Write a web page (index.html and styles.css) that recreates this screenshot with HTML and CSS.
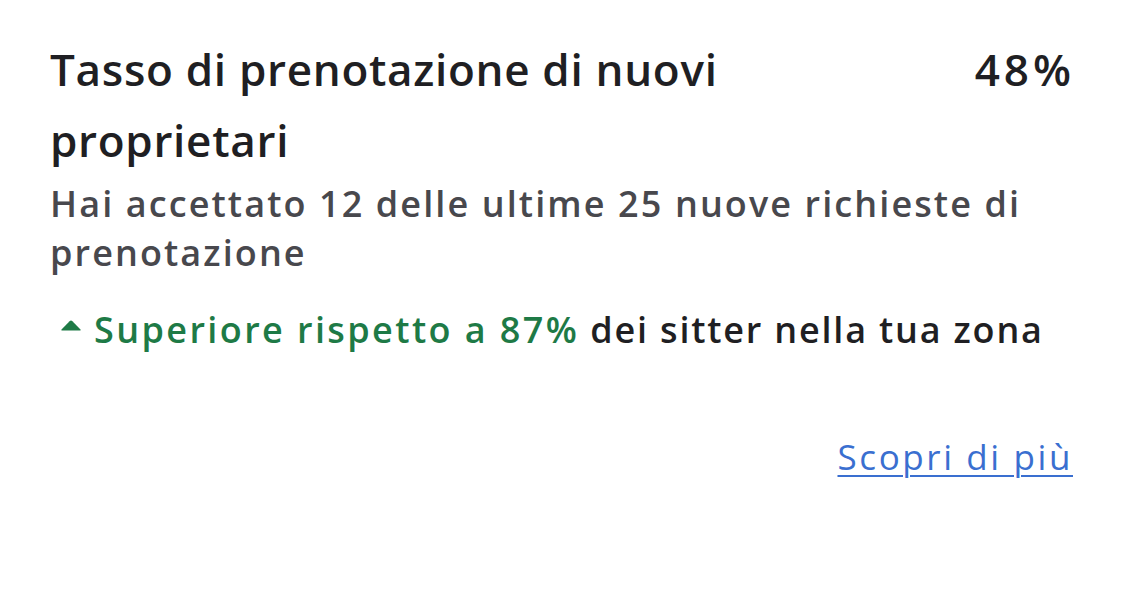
FILE: index.html
```html
<!DOCTYPE html>
<html lang="it">
<head>
    <meta charset="UTF-8">
    <title>Tasso di prenotazione</title>
    <link rel="stylesheet" href="styles.css">
</head>
<body>
    <div class="stat-card">
        <div class="stat-header">
            <h2 class="stat-title">Tasso di prenotazione di nuovi proprietari</h2>
            <span class="stat-value">48%</span>
        </div>
        <p class="stat-desc">Hai accettato 12 delle ultime 25 nuove richieste di prenotazione</p>
        <p class="stat-compare">
            <svg class="arrow-up" width="22" height="11" viewBox="0 0 22 11">
                <path d="M9.6 1.2 Q11 -0.2 12.4 1.2 L20.5 9.5 Q21 10.5 19.8 10.5 L2.2 10.5 Q1 10.5 1.5 9.5 Z" fill="#1e7a46"/>
            </svg>
            <span><span class="better">Superiore rispetto a 87%</span> dei sitter nella tua zona</span>
        </p>
        <div class="stat-footer">
            <a href="#" class="more-link">Scopri di più</a>
        </div>
    </div>
</body>
</html>
```

FILE: styles.css
```css
body {
    font-family: 'Open Sans', 'Noto Sans', sans-serif;
    background-color: #fff;
    color: #1f1f23;
    margin: 0;
    padding: 0;
}

.stat-card {
    padding: 34px 52px 0 50px;
}

.stat-header {
    display: flex;
    justify-content: space-between;
    align-items: flex-start;
}

.stat-title {
    margin: 0;
    width: 760px;
    font-size: 44px;
    font-weight: 600;
    line-height: 71px;
    letter-spacing: 0.7px;
}

.stat-value {
    font-size: 44px;
    font-weight: 600;
    line-height: 71px;
    letter-spacing: 4px;
    margin-right: -2px;
}

.stat-desc {
    margin: 3px 0 0 0;
    font-size: 36px;
    font-weight: 600;
    line-height: 49px;
    letter-spacing: 2.1px;
    color: #48484d;
}

.stat-compare {
    margin: 28px 0 0 0;
    font-size: 36px;
    font-weight: 600;
    line-height: 49px;
    letter-spacing: 1.8px;
    display: flex;
    align-items: center;
    gap: 12px;
}

.arrow-up {
    margin-left: 10px;
    margin-top: -8px;
}

.better {
    color: #1e7a46;
    letter-spacing: 2.4px;
}

.stat-footer {
    display: flex;
    justify-content: flex-end;
    margin-top: 79px;
}

.more-link {
    font-size: 35px;
    font-weight: 400;
    line-height: 48px;
    letter-spacing: 2.6px;
    color: #3a6fd0;
    text-decoration: underline;
    text-underline-offset: 5px;
    text-decoration-thickness: 2px;
}
```
